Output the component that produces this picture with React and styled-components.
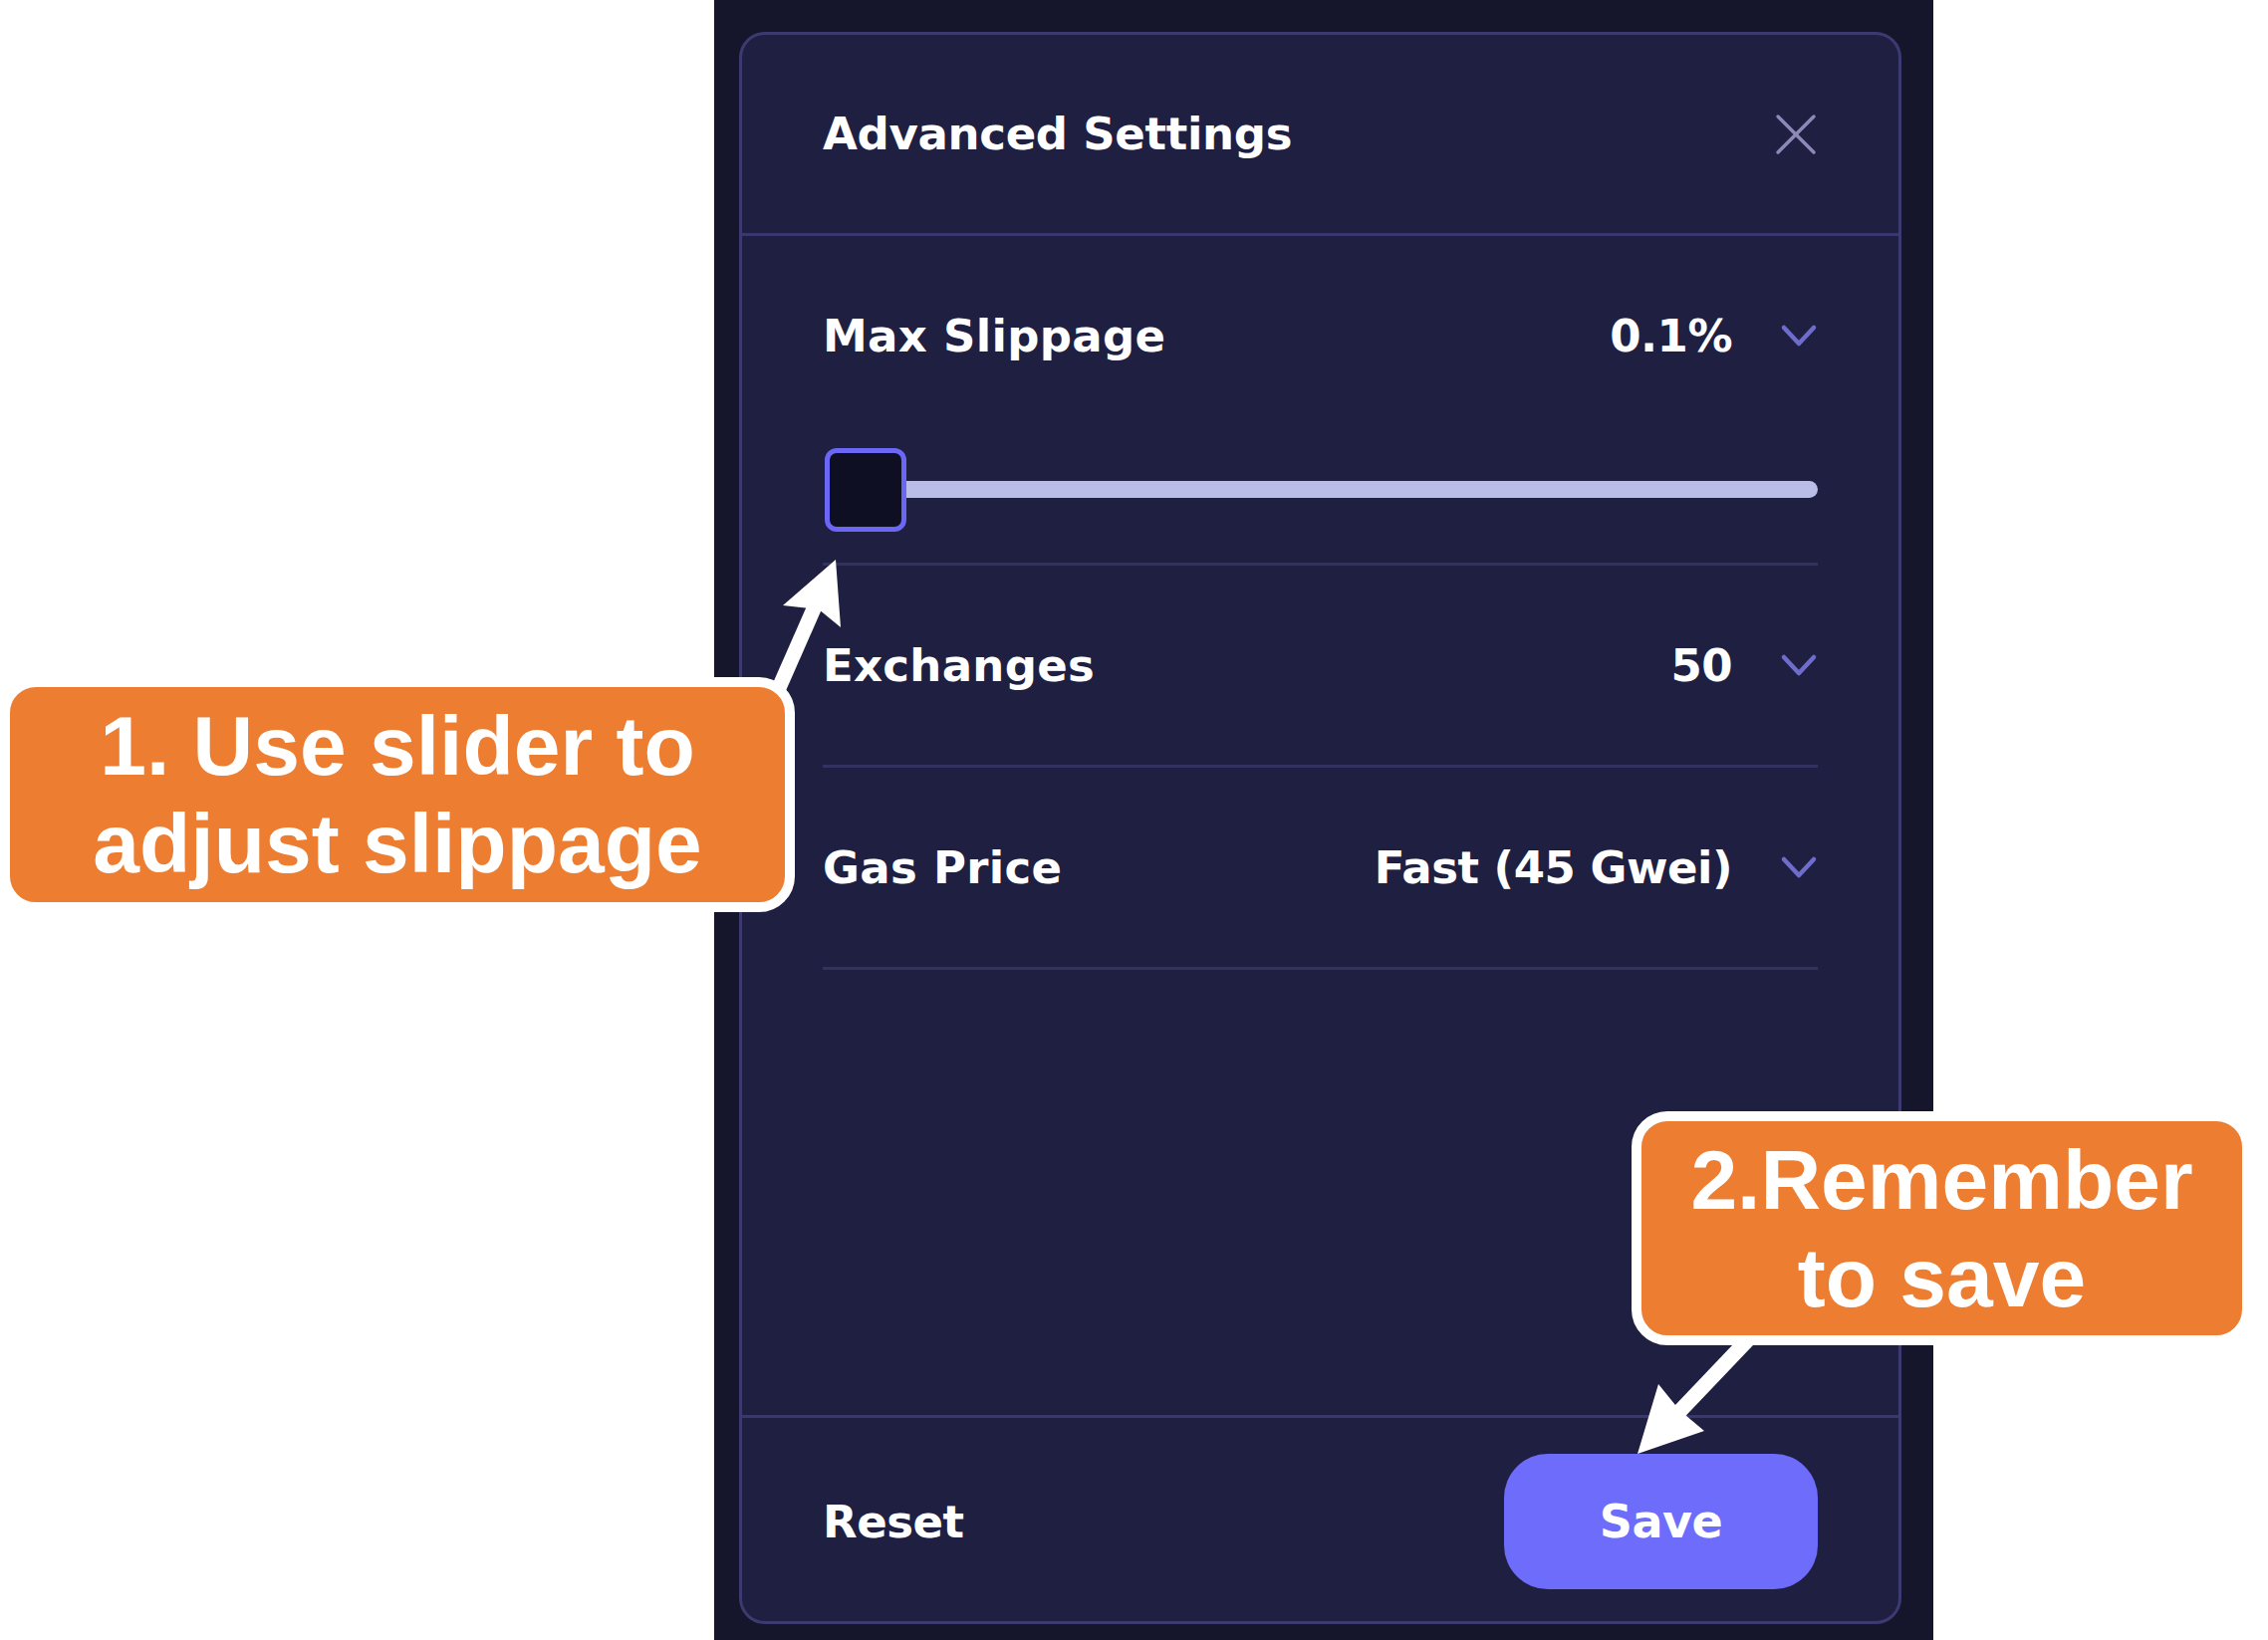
import React from 'react';
import styled, { createGlobalStyle } from 'styled-components';

const GlobalStyle = createGlobalStyle`
  html, body {
    margin: 0;
    padding: 0;
    background: #ffffff;
  }
  #root {
    width: 2277px;
    height: 1647px;
  }
`;

const Page = styled.div`
  position: relative;
  width: 2277px;
  height: 1647px;
  display: flex;
  padding-left: 717px;
  box-sizing: border-box;
  overflow: hidden;
  font-family: "DejaVu Sans", "Open Sans", sans-serif;
`;

const Panel = styled.div`
  width: 1224px;
  height: 100%;
  box-sizing: border-box;
  padding: 32px 32px 16px 25px;
  background: #15152b;
`;

const Card = styled.div`
  height: 100%;
  box-sizing: border-box;
  display: flex;
  flex-direction: column;
  background: #1f1f41;
  border: 3px solid #3d3a72;
  border-radius: 26px;
`;

const Header = styled.div`
  height: 199px;
  flex: none;
  display: flex;
  align-items: center;
  justify-content: space-between;
  padding: 0 82px 0 81px;
  border-bottom: 3px solid #3a3770;
`;

const Title = styled.div`
  color: #ffffff;
  font-size: 45px;
  font-weight: 700;
  letter-spacing: -0.3px;
`;

const Body = styled.div`
  flex: 1;
  padding: 0 81px;
`;

const Section = styled.div`
  border-bottom: 3px solid #33315f;
`;

const Row = styled.div`
  height: 200px;
  display: flex;
  align-items: center;
  justify-content: space-between;
`;

const Label = styled.div`
  color: #ffffff;
  font-size: 45px;
  font-weight: 700;
  letter-spacing: 0.3px;
`;

const ValueBox = styled.div`
  display: flex;
  align-items: center;
  gap: 48px;
`;

const Value = styled.div`
  color: #ffffff;
  font-size: 45px;
  font-weight: 700;
  letter-spacing: -0.5px;
`;

const SliderWrap = styled.div`
  height: 128px;
  display: flex;
  align-items: flex-start;
  padding: 13px 0 0 2px;
  box-sizing: border-box;
`;

const Thumb = styled.div`
  flex: none;
  width: 72px;
  height: 74px;
  border: 5px solid #6b67f4;
  border-radius: 12px;
  background: #0f0f24;
  position: relative;
  z-index: 1;
`;

const Track = styled.div`
  flex: 1;
  height: 17px;
  margin: 33px 0 0 -6px;
  background: #b9bde8;
  border-radius: 0 9px 9px 0;
`;

const Footer = styled.div`
  flex: none;
  height: 200px;
  display: flex;
  align-items: center;
  justify-content: space-between;
  padding: 4px 81px 0;
  border-top: 3px solid #3a3770;
`;

const ResetButton = styled.div`
  color: #ffffff;
  font-size: 45px;
  font-weight: 700;
  letter-spacing: -0.5px;
`;

const SaveButton = styled.div`
  width: 315px;
  height: 136px;
  display: flex;
  align-items: center;
  justify-content: center;
  background: #6e6cfb;
  border-radius: 44px;
  color: #ffffff;
  font-size: 46px;
  font-weight: 700;
  letter-spacing: -0.5px;
`;

const Callout = styled.div`
  position: absolute;
  left: ${p => p.x}px;
  top: ${p => p.y}px;
  width: ${p => p.w}px;
  height: ${p => p.h}px;
  box-sizing: border-box;
  border: 10px solid #ffffff;
  border-radius: 36px;
  background: #ed7d31;
  display: flex;
  flex-direction: column;
  align-items: center;
  justify-content: center;
  color: #ffffff;
  font-family: "Liberation Sans", Arial, sans-serif;
  font-weight: 700;
  font-size: 84px;
  line-height: 98px;
  text-align: center;
  z-index: 3;
`;

const ArrowLayer = styled.svg`
  position: absolute;
  left: 0;
  top: 0;
  z-index: 2;
  pointer-events: none;
`;

const Chevron = () => (
  <svg width="38" height="26" viewBox="0 0 38 26">
    <polyline points="4,5 19,21 34,5" fill="none" stroke="#6f6dcc" strokeWidth="4.5" strokeLinecap="round" strokeLinejoin="round" />
  </svg>
);

const CloseIcon = () => (
  <svg width="42" height="42" viewBox="0 0 42 42">
    <g stroke="#8c89b8" strokeWidth="3.5" strokeLinecap="round">
      <line x1="3" y1="3" x2="39" y2="39" />
      <line x1="39" y1="3" x2="3" y2="39" />
    </g>
  </svg>
);

const SettingRow = ({ label, value }) => (
  <Row>
    <Label>{label}</Label>
    <ValueBox>
      <Value>{value}</Value>
      <Chevron />
    </ValueBox>
  </Row>
);

const App = () => {
  return (
    <>
      <GlobalStyle />
      <Page>
        <Panel>
          <Card>
            <Header>
              <Title>Advanced Settings</Title>
              <CloseIcon />
            </Header>
            <Body>
              <Section>
                <SettingRow label="Max Slippage" value="0.1%" />
                <SliderWrap>
                  <Thumb />
                  <Track />
                </SliderWrap>
              </Section>
              <Section>
                <SettingRow label="Exchanges" value="50" />
              </Section>
              <Section>
                <SettingRow label="Gas Price" value="Fast (45 Gwei)" />
              </Section>
            </Body>
            <Footer>
              <ResetButton>Reset</ResetButton>
              <SaveButton>Save</SaveButton>
            </Footer>
          </Card>
        </Panel>

        <ArrowLayer width="2277" height="1647" viewBox="0 0 2277 1647">
          <g fill="#ffffff">
            <line x1="778" y1="700" x2="822" y2="600" stroke="#ffffff" strokeWidth="15" />
            <polygon points="839,562 844,630 822,612 786,608" />
            <line x1="1760" y1="1340" x2="1680" y2="1424" stroke="#ffffff" strokeWidth="15" />
            <polygon points="1644,1460 1665,1390 1686,1416 1711,1437" />
          </g>
        </ArrowLayer>

        <Callout x={0} y={680} w={798} h={236}>
          <div>1. Use slider to</div>
          <div>adjust slippage</div>
        </Callout>
        <Callout x={1638} y={1116} w={623} h={235}>
          <div>2.Remember</div>
          <div>to save</div>
        </Callout>
      </Page>
    </>
  );
};

export default App;
